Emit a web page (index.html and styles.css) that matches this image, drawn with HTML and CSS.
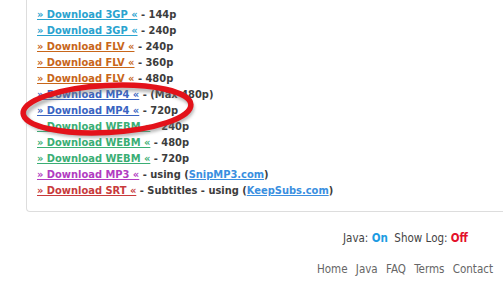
FILE: index.html
```html
<!DOCTYPE html>
<html lang="en">
<head>
    <meta charset="UTF-8">
    <title>Download links</title>
    <link rel="stylesheet" href="styles.css">
</head>
<body>
    <div class="page">
        <div class="links-box">
            <div class="row"><a class="dl c3gp" href="#">&raquo; Download 3GP &laquo;</a> - 144p</div>
            <div class="row"><a class="dl c3gp" href="#">&raquo; Download 3GP &laquo;</a> - 240p</div>
            <div class="row"><a class="dl flv" href="#">&raquo; Download FLV &laquo;</a> - 240p</div>
            <div class="row"><a class="dl flv" href="#">&raquo; Download FLV &laquo;</a> - 360p</div>
            <div class="row"><a class="dl flv" href="#">&raquo; Download FLV &laquo;</a> - 480p</div>
            <div class="row"><a class="dl mp4" href="#">&raquo; Download MP4 &laquo;</a> - (Max 480p)</div>
            <div class="row"><a class="dl mp4" href="#">&raquo; Download MP4 &laquo;</a> - 720p</div>
            <div class="row"><a class="dl webm" href="#">&raquo; Download WEBM &laquo;</a> - 240p</div>
            <div class="row"><a class="dl webm" href="#">&raquo; Download WEBM &laquo;</a> - 480p</div>
            <div class="row"><a class="dl webm" href="#">&raquo; Download WEBM &laquo;</a> - 720p</div>
            <div class="row"><a class="dl mp3" href="#">&raquo; Download MP3 &laquo;</a> - using (<a class="site" href="#">SnipMP3.com</a>)</div>
            <div class="row"><a class="dl srt" href="#">&raquo; Download SRT &laquo;</a> - Subtitles - using (<a class="site" href="#">KeepSubs.com</a>)</div>

            <!-- hand drawn red circle over the 720p link -->
            <svg class="marker" width="200" height="70" viewBox="0 0 200 70">
                <defs>
                    <filter id="shade" x="-10%" y="-30%" width="120%" height="160%">
                        <feGaussianBlur stdDeviation="1.5"/>
                    </filter>
                </defs>
                <ellipse cx="95" cy="37" rx="83" ry="23" transform="rotate(-3 95 37)" fill="none" stroke="#777" stroke-width="5" opacity="0.5" filter="url(#shade)"/>
                <ellipse cx="93" cy="34" rx="84" ry="23.5" transform="rotate(-3 93 34)" fill="none" stroke="#e3121a" stroke-width="5.5"/>
            </svg>
        </div>

        <div class="footer">
            <div class="status">Java: <b class="on">On</b>&nbsp; Show Log: <b class="off">Off</b></div>
            <div class="menu">
                <a href="#">Home</a>
                <a href="#">Java</a>
                <a href="#">FAQ</a>
                <a href="#">Terms</a>
                <a href="#">Contact</a>
            </div>
        </div>
    </div>
</body>
</html>
```

FILE: styles.css
```css
body {
    margin: 0;
    background: #fff;
    font-family: "DejaVu Sans Condensed", "DejaVu Sans", sans-serif;
    overflow: hidden;
}
.page {
    width: 503px;
}
.links-box {
    position: relative;
    margin-left: 26px;
    width: 520px;
    padding: 7px 0 12px 10px;
    border: 1px solid #ddd;
    border-top: 0;
    border-right: 0;
    border-radius: 0 0 0 4px;
    font-size: 11px;
    font-weight: bold;
    line-height: 16px;
    color: #3c3c3c;
}
.dl {
    text-decoration: underline;
}
.c3gp { color: #2aa3cf; }
.flv { color: #c8661a; }
.mp4 { color: #3a64c2; }
.webm { color: #3aae74; }
.mp3 { color: #b23cc2; }
.srt { color: #c83a3c; }
.site {
    color: #3a8fe0;
}
.marker {
    position: absolute;
    left: -13px;
    top: 75px;
    pointer-events: none;
}
.footer {
    padding-right: 10px;
    text-align: right;
    font-size: 11.5px;
    color: #444;
}
.status {
    margin-top: 19px;
    padding-right: 25px;
}
.on { color: #1c9ce2; }
.off { color: #e3102a; }
.menu {
    margin-top: 17px;
}
.menu a {
    color: #666;
    text-decoration: none;
    margin-left: 5px;
}
```
